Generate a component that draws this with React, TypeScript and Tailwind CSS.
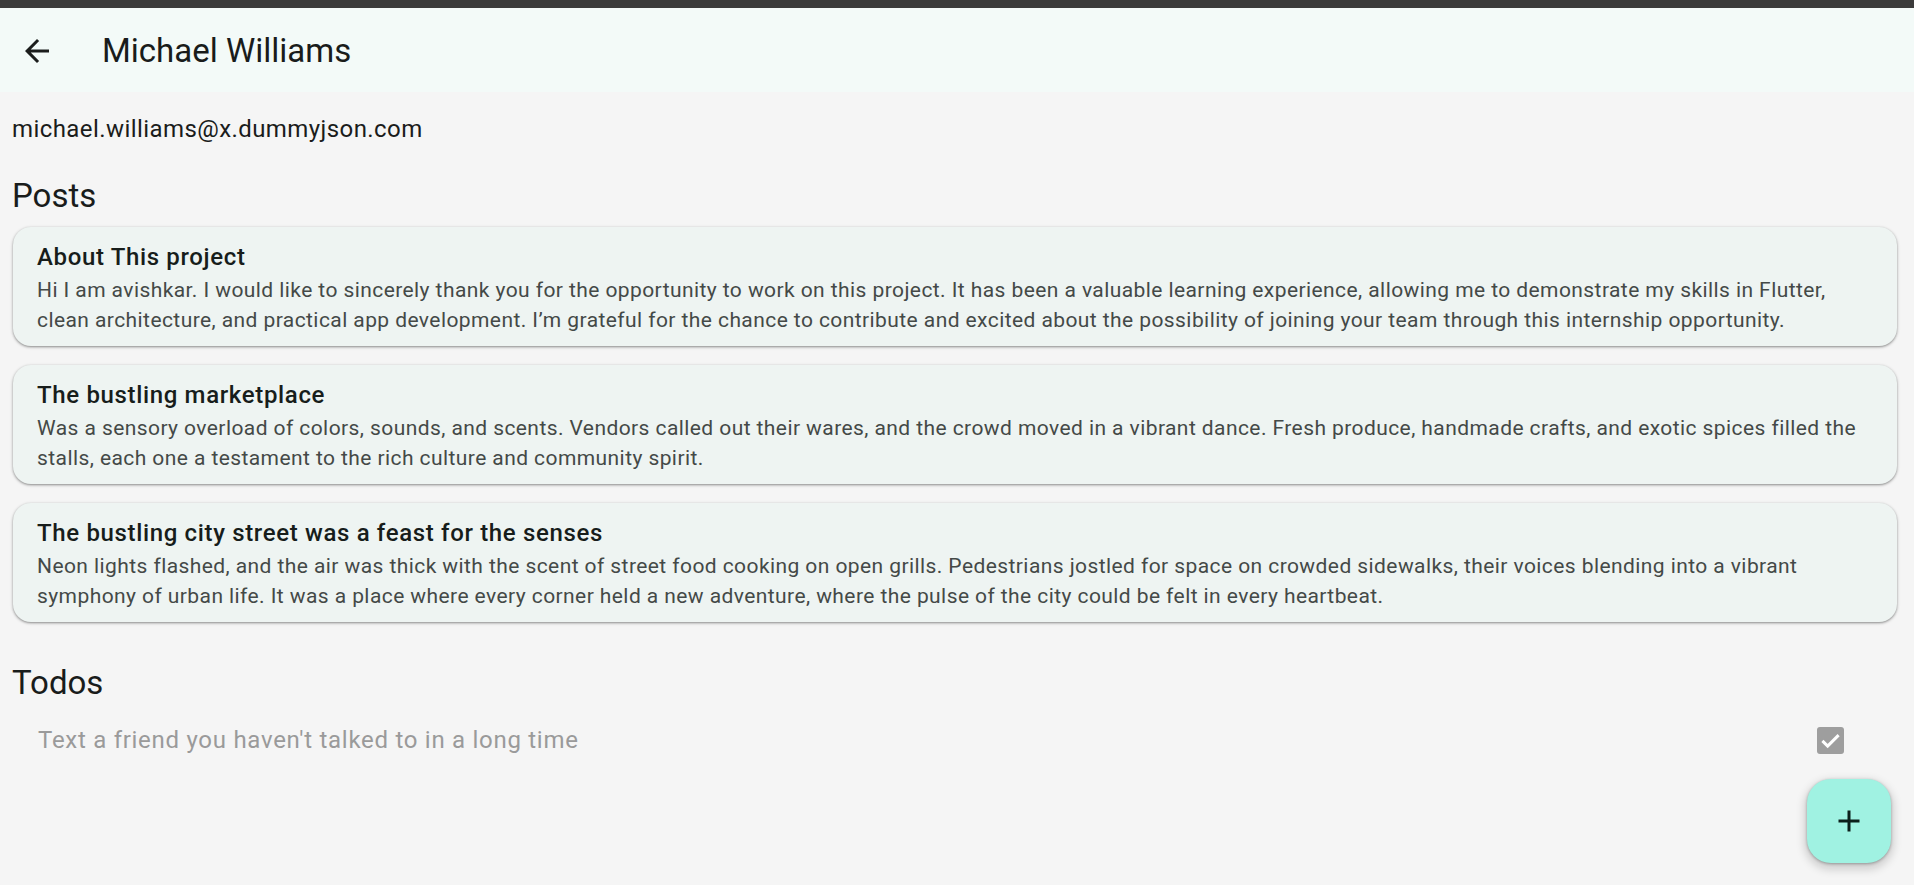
const posts = [
  {
    title: "About This project",
    body: "Hi I am avishkar. I would like to sincerely thank you for the opportunity to work on this project. It has been a valuable learning experience, allowing me to demonstrate my skills in Flutter, clean architecture, and practical app development. I’m grateful for the chance to contribute and excited about the possibility of joining your team through this internship opportunity.",
  },
  {
    title: "The bustling marketplace",
    body: "Was a sensory overload of colors, sounds, and scents. Vendors called out their wares, and the crowd moved in a vibrant dance. Fresh produce, handmade crafts, and exotic spices filled the stalls, each one a testament to the rich culture and community spirit.",
  },
  {
    title: "The bustling city street was a feast for the senses",
    body: "Neon lights flashed, and the air was thick with the scent of street food cooking on open grills. Pedestrians jostled for space on crowded sidewalks, their voices blending into a vibrant symphony of urban life. It was a place where every corner held a new adventure, where the pulse of the city could be felt in every heartbeat.",
  },
];

const todos = [{ text: "Text a friend you haven't talked to in a long time", done: true }];

export default function App() {
  return (
    <div className="h-screen overflow-hidden bg-[#f5f5f5] font-['Roboto',sans-serif] relative">
      {/* window strip */}
      <div className="h-[8px] bg-[#3b3b3b]" />

      {/* App bar */}
      <header className="h-[84px] bg-[#f3faf8] flex items-center">
        <button className="w-[36px] h-[36px] ml-[19px] mt-[1px] flex items-center justify-center text-[#1b1d1c]">
          <svg viewBox="0 0 24 24" className="w-[36px] h-[36px]" fill="currentColor">
            <path d="M20 11H7.83l5.59-5.59L12 4l-8 8 8 8 1.41-1.41L7.83 13H20v-2z" />
          </svg>
        </button>
        <h1 className="ml-[47px] mt-[2px] text-[33px] leading-[42px] text-[#191c1b]">Michael Williams</h1>
      </header>

      <div className="pl-[12px] pr-[12px]">
        <p className="mt-[19px] text-[24px] leading-[36px] tracking-[0.42px] text-[#1a1c1b]">
          michael.williams@x.dummyjson.com
        </p>

        <h2 className="mt-[28px] text-[33px] leading-[42px] text-[#191c1b]">Posts</h2>

        <div className="mt-[10px] ml-px mr-[5px] flex flex-col gap-[19px]">
          {posts.map((p) => (
            <div
              key={p.title}
              className="bg-[#eef4f2] rounded-[18px] px-[24px] pt-[12px] pb-[11px] shadow-[0_1px_2px_rgba(0,0,0,0.3),0_1px_3px_1px_rgba(0,0,0,0.12)]"
            >
              <h3 className="text-[24px] leading-[36px] font-medium tracking-[0.65px] text-[#171d1b]">
                {p.title}
              </h3>
              <p className="text-[21px] leading-[30px] tracking-[0.42px] text-[#444947]">{p.body}</p>
            </div>
          ))}
        </div>

        <h2 className="mt-[40px] text-[33px] leading-[42px] text-[#191c1b]">Todos</h2>

        <div className="mt-[18px] flex flex-col">
          {todos.map((t) => (
            <div key={t.text} className="flex items-center h-[36px] pl-[26px] pr-[58px]">
              <span className="flex-1 text-[24px] leading-[36px] tracking-[0.72px] text-[#9a9a9a]">
                {t.text}
              </span>
              <span className="w-[27px] h-[27px] rounded-[3px] bg-[#9e9e9e] flex items-center justify-center">
                <svg viewBox="0 0 18 18" className="w-[27px] h-[27px]" fill="none">
                  <path d="M3.6 9.3 L7.1 12.7 L14.4 5.4" stroke="#ffffff" strokeWidth="2" />
                </svg>
              </span>
            </div>
          ))}
        </div>
      </div>

      {/* FAB */}
      <button className="absolute right-[23px] bottom-[22px] w-[84px] h-[84px] rounded-[24px] bg-[#a0f2e2] flex items-center justify-center shadow-[0_4px_8px_3px_rgba(0,0,0,0.15),0_1px_3px_rgba(0,0,0,0.3)]">
        <svg viewBox="0 0 24 24" className="w-[36px] h-[36px]" fill="#0c1f1b">
          <path d="M19 13h-6v6h-2v-6H5v-2h6V5h2v6h6v2z" />
        </svg>
      </button>
    </div>
  );
}
